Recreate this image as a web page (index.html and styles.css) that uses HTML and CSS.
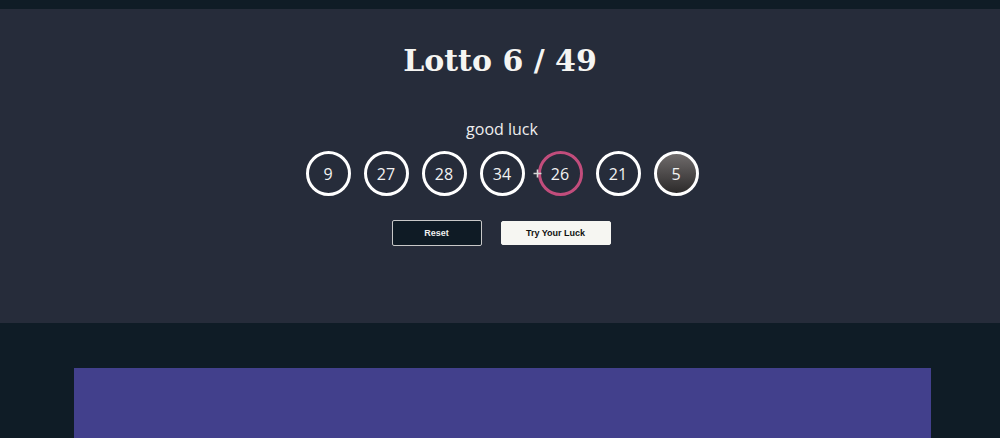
FILE: index.html
```html
<!DOCTYPE html>
<html>
<head>
<meta charset="utf-8">
<link rel="stylesheet" href="styles.css">
</head>
<body>
<main class="panel">
  <h1 class="title">Lotto 6 / 49</h1>
  <p class="status">good luck</p>
  <div class="balls">
    <div class="ball">9</div>
    <div class="ball">27</div>
    <div class="ball">28</div>
    <div class="ball">34</div>
    <div class="ball ball-active">26<svg class="cursor" width="9" height="9" viewBox="0 0 9 9"><path d="M4.5 0.5V8.5M0.5 4.5H8.5" stroke="#d8d8d8" stroke-width="1.6"/></svg></div>
    <div class="ball">21</div>
    <div class="ball ball-bonus">5</div>
  </div>
  <div class="actions">
    <button class="btn btn-reset">Reset</button>
    <button class="btn btn-try">Try Your Luck</button>
  </div>
</main>
<section class="board"></section>
</body>
</html>
```
FILE: styles.css
```css
html, body {
  margin: 0;
  padding: 0;
}
body {
  background: #0f1c26;
  padding-top: 9px;
  height: 438px;
  overflow: hidden;
  box-sizing: border-box;
}
.panel {
  background: #262c3a;
  height: 314px;
  display: flex;
  flex-direction: column;
  align-items: center;
  box-sizing: border-box;
  padding-top: 32px;
}
.title {
  margin: 0;
  font-family: "DejaVu Serif", serif;
  font-weight: bold;
  font-size: 30px;
  line-height: 40px;
  color: #f5f5f2;
}
.status {
  margin: 37px 0 0 4px;
  font-family: "Open Sans", sans-serif;
  font-size: 16px;
  line-height: 22px;
  color: #eeeeee;
}
.balls {
  display: flex;
  gap: 13px;
  margin-top: 11px;
  margin-left: 4px;
}
.ball {
  position: relative;
  width: 45px;
  height: 45px;
  box-sizing: border-box;
  border: 3px solid #ffffff;
  border-radius: 50%;
  display: flex;
  align-items: center;
  justify-content: center;
  font-family: "Open Sans", sans-serif;
  font-size: 16px;
  color: #f2f2f2;
}
.ball-active {
  border-color: #c24d7c;
}
.ball-bonus {
  background: linear-gradient(#6f6b6b, #2c2a2a);
}
.cursor {
  position: absolute;
  left: -8px;
  top: 15px;
}
.actions {
  display: flex;
  gap: 19px;
  margin-top: 24px;
  margin-left: 2px;
  align-items: center;
}
.btn {
  font-family: "Liberation Sans", Arial, sans-serif;
  font-weight: bold;
  font-size: 9px;
  padding: 0;
  border-radius: 2px;
  cursor: pointer;
}
.btn-reset {
  width: 90px;
  height: 26px;
  background: #0f1b25;
  color: #f0f0f0;
  border: 1px solid #c8c8c8;
}
.btn-try {
  width: 110px;
  height: 24px;
  background: #f6f6f2;
  color: #111111;
  border: 1px solid #f6f6f2;
}
.board {
  margin: 45px 69px 0 74px;
  height: 70px;
  background: #42408c;
}
```
